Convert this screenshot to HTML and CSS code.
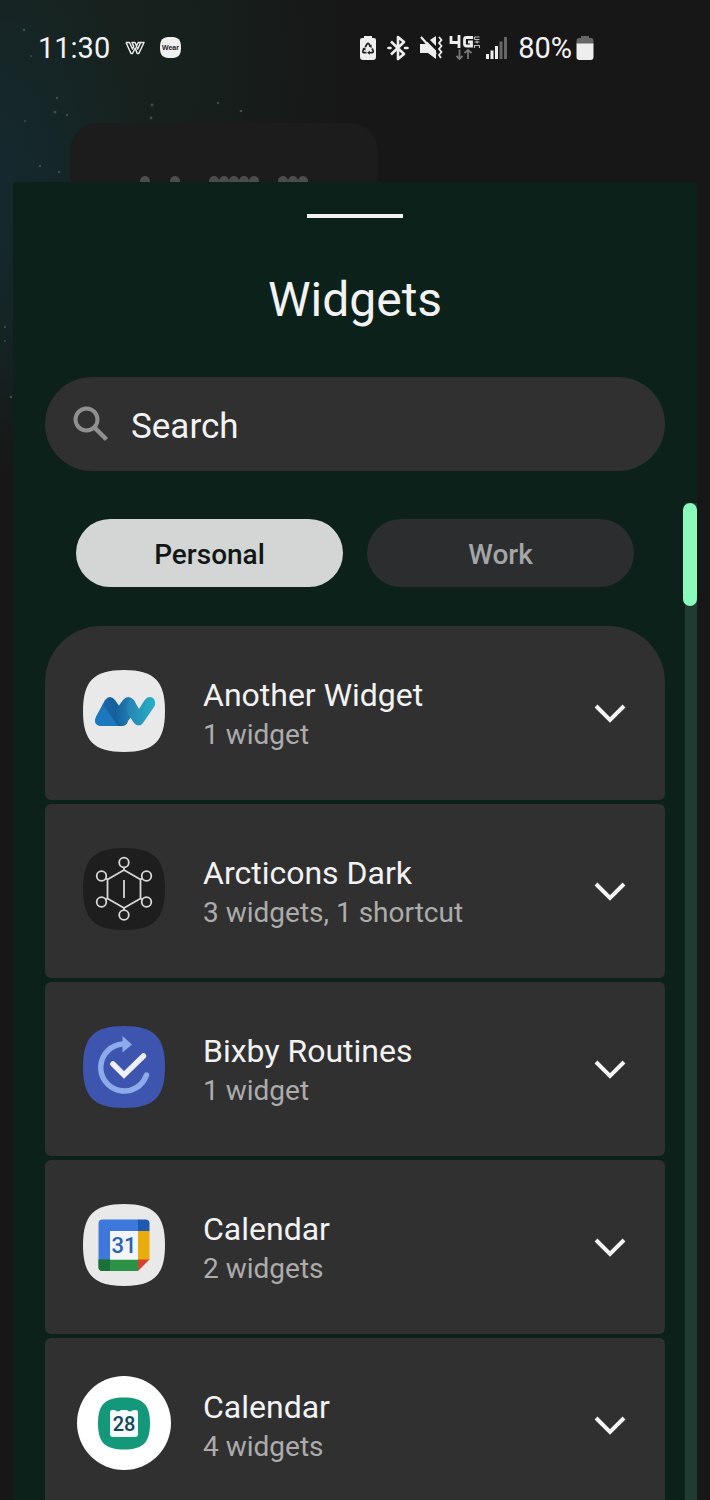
FILE: index.html
```html
<!DOCTYPE html>
<html lang="en">
<head>
<meta charset="utf-8">
<meta name="viewport" content="width=device-width, initial-scale=1">
<title>Widgets</title>
<link rel="stylesheet" href="styles.css">
</head>
<body>
<svg class="stars" viewBox="0 0 250 420" aria-hidden="true">
  <g fill="#39534b"><circle cx="24" cy="30" r="1.3"/><circle cx="31" cy="56" r="1"/><circle cx="57" cy="98" r="1.2"/><circle cx="55" cy="112" r="1.5"/><circle cx="67" cy="115" r="1.2"/><circle cx="25" cy="121" r="1"/><circle cx="152" cy="105" r="1.4"/><circle cx="151" cy="118" r="1.4"/><circle cx="218" cy="103" r="1.2"/><circle cx="241" cy="111" r="1.3"/><circle cx="40" cy="166" r="1.2"/><circle cx="59" cy="172" r="1.2"/><circle cx="5" cy="327" r="1.1"/><circle cx="5" cy="341" r="1"/><circle cx="11" cy="397" r="1.2"/></g>
</svg>
<header class="status">
  <div class="status-left">
    <time class="clock">11:30</time>
    <svg width="20" height="14" viewBox="0 0 20 14" fill="none" stroke="#e8e8e8" stroke-width="1.5" stroke-linejoin="round"><path d="M1 1.500h3.500L7.500 8l1.200-2.600L7 1.500h3l1.500 3.200M1 1.500 6 12.500h1.500l2.700-5.500 2 5.500h1.600L19 1.500h-3.300l-3 6.500-1.300-2.800 1.800-3.700h3"/></svg>
    <svg width="21" height="21" viewBox="0 0 21 21"><path d="M10.500 0C18.500 0 21 2.500 21 10.500S18.500 21 10.500 21 0 18.500 0 10.500 2.500 0 10.500 0z" fill="#f0f0f0"/><text x="10.500" y="13" text-anchor="middle" class="wear">Wear</text></svg>
  </div>
  <div class="status-right">
    <svg width="18" height="26" viewBox="0 0 18 26"><path d="M5 1h8v2h2q2 0 2 2v17q0 3-3 3H4q-3 0-3-3V5q0-2 2-2h2z" fill="#eee"/><g fill="none" stroke="#222" stroke-width="1.700"><path d="m6.300 12 1.700-3q1-1.400 2 0l1.500 2.600M13 13.500l1.200 2.300q.500 1.700-1.200 1.900h-3M7.500 17.700H5q-1.700-.200-1-2L5.300 13"/></g><path d="m12.500 9.500.200 3.400-3-1.300zM10.800 15.500v4.200l-2.700-2zM3.300 13.900l3-1.600.3 3.300z" fill="#222"/></svg>
    <svg width="22" height="26" viewBox="0 0 22 26" fill="none" stroke="#eee" stroke-width="2.600" stroke-linejoin="round"><path d="m4 6.500 13 12.500-6 5V2l6 5L4 19.500"/><path d="M1.500 13h2M18 13h2.500" stroke-linecap="round"/></svg>
    <div class="network">
      <svg width="24" height="26" viewBox="0 0 24 26" fill="none"><path d="M1 9h5l2.500-2L17 15.500V24l-8-6H1zM11 5l6-4v10z" fill="#eee"/><path d="m2 2 15 17" stroke="#eee" stroke-width="2.200"/><path d="m20 2 2.500 3L20 8l2.500 3-2.500 3 2.500 3-2.500 3 2 3" stroke="#eee" stroke-width="1.800"/></svg>
      <svg width="31" height="26" viewBox="0 0 31 26"><g fill="none" stroke="#eee" stroke-width="2.800"><path d="M2 1v6.500h8M10 0v13M24 2.500h-6.500q-2 0-2 2v4.500q0 2 2 2h5V7H19"/></g><g fill="none" stroke="#bbb" stroke-width="1.200"><path d="M25.500 2h5M25.500 4.500h5M25.500 2v2.500M25.500 7h5M28 5.500v3M25.500 10.500h5V13M25.500 10v3"/></g><path d="M10.500 14.500V24m-3-3 3 3 3-3M19 24v-9m-3.500 3 3.500-3 3.500 3" fill="none" stroke="#777" stroke-width="1.800"/></svg>
      <svg width="22" height="22" viewBox="0 0 22 22"><path d="M0 17h3v5H0zM4.500 13.500h3V22h-3zM9 9h3v13H9z" fill="#eee"/><path d="M13.500 4.500h3V22h-3zM18 0h3v22h-3z" fill="#666"/></svg>
    </div>
    <div class="battery">
      <span class="percent">80%</span>
      <svg width="18" height="26" viewBox="0 0 18 26"><path d="M5 1h8v2h2q2.500 0 2.500 3v3H.500V6q0-3 2.500-3h2z" fill="#666"/><path d="M.500 8.500h17V22q0 3-3 3h-11q-3 0-3-3z" fill="#eee"/></svg>
    </div>
  </div>
</header>

<div class="home-widget" aria-hidden="true">
  <svg width="180" height="6" viewBox="0 0 180 6" fill="#4c4c4c"><circle cx="5" cy="5" r="5"/><circle cx="35" cy="5" r="5"/><circle cx="74" cy="5" r="5"/><circle cx="84" cy="5" r="5"/><circle cx="94" cy="5" r="5"/><circle cx="104" cy="5" r="5"/><circle cx="114" cy="5" r="5"/><circle cx="143" cy="5" r="5"/><circle cx="153" cy="5" r="5"/><circle cx="163" cy="5" r="5"/></svg>
</div>

<main class="sheet">
  <div class="handle"></div>
  <h1 class="title">Widgets</h1>
  <label class="search">
    <svg width="36" height="36" viewBox="0 0 36 36" fill="none" stroke="#909090" stroke-width="4"><circle cx="13.500" cy="13.500" r="11"/><path d="m21.500 21.500 12 12" stroke-width="4.500"/></svg>
    <input class="search-input" type="search" placeholder="Search" aria-label="Search">
  </label>
  <div class="tabs" role="tablist">
    <button class="tab tab-active" role="tab" aria-selected="true">Personal</button>
    <button class="tab" role="tab" aria-selected="false">Work</button>
  </div>
  <div class="list">
    <button class="row">
      <span class="icon">
        <svg width="82" height="82" viewBox="0 0 82 82"><defs><linearGradient id="aw1" x1="0" x2="1"><stop stop-color="#1a6aa8"/><stop offset="1" stop-color="#155a98"/></linearGradient><linearGradient id="aw2" x1="0" x2="1"><stop stop-color="#155f9e"/><stop offset="1" stop-color="#2690bd"/></linearGradient><linearGradient id="aw3" x1="0" x2="1"><stop stop-color="#2480b3"/><stop offset="1" stop-color="#28b2c5"/></linearGradient></defs><path d="M41 0C71 0 82 11 82 41S71 82 41 82 0 71 0 41 11 0 41 0z" fill="#e9e9e9"/><path d="M22 30q5-6 10 0l13 19q0 7-6 7H17q-7-2-4-9z" fill="url(#aw1)"/><path d="M20 35 35 56H17q-7-2-4-9z" fill="#1b78bd"/><path d="m32 41 8-11q5-6 11 0l4 8-10 13q-5 7-9 3z" fill="url(#aw2)"/><path d="M47 28q2 0 4 3l5 8 5-8q4-6 9-3 4 4 1 9L60 53q-4 5-9 0l-6-9-2-7z" fill="url(#aw3)"/></svg>
      </span>
      <span class="text"><span class="name">Another Widget</span><span class="count">1 widget</span></span>
      <svg class="chevron" viewBox="0 0 48 48"><path d="m10 17 14 14 14-14"/></svg>
    </button>
    <button class="row">
      <span class="icon">
        <svg width="82" height="82" viewBox="0 0 82 82"><path d="M41 0C71 0 82 11 82 41S71 82 41 82 0 71 0 41 11 0 41 0z" fill="#1e1e1e"/><g fill="none" stroke="#d8d8d8" stroke-width="1.800"><path d="m41 22 16.500 9.500v19L41 60l-16.500-9.500v-19zM41 32v18M41 19v3M41 60v3M57.500 31.500l2-1M57.500 50.500l2 1M24.500 31.500l-2-1M24.500 50.500l-2 1"/><circle cx="41" cy="14.500" r="4.800"/><circle cx="41" cy="67" r="4.800"/><circle cx="18.500" cy="28" r="4.800"/><circle cx="63.500" cy="28" r="4.800"/><circle cx="18.500" cy="54" r="4.800"/><circle cx="63.500" cy="54" r="4.800"/></g></svg>
      </span>
      <span class="text"><span class="name">Arcticons Dark</span><span class="count">3 widgets, 1 shortcut</span></span>
      <svg class="chevron" viewBox="0 0 48 48"><path d="m10 17 14 14 14-14"/></svg>
    </button>
    <button class="row">
      <span class="icon">
        <svg width="82" height="82" viewBox="0 0 82 82"><path d="M41 0C71 0 82 11 82 41S71 82 41 82 0 71 0 41 11 0 41 0z" fill="#3d55ae"/><path d="M40 18A23.500 23.500 0 1 0 63.500 49" fill="none" stroke="#8cabea" stroke-width="5.500" stroke-linecap="round"/><path d="m39.500 10 9.500 8.500-9.500 8z" fill="#8cabea"/><path d="m30 38 11 11 19.500-19" fill="none" stroke="#eef0fa" stroke-width="5.500" stroke-linecap="round"/></svg>
      </span>
      <span class="text"><span class="name">Bixby Routines</span><span class="count">1 widget</span></span>
      <svg class="chevron" viewBox="0 0 48 48"><path d="m10 17 14 14 14-14"/></svg>
    </button>
    <button class="row">
      <span class="icon">
        <svg width="82" height="82" viewBox="0 0 82 82"><path d="M41 0C71 0 82 11 82 41S71 82 41 82 0 71 0 41 11 0 41 0z" fill="#e9e9e9"/><path d="M15.500 56V19.500q0-4 4-4H56v12H27V56z" fill="#3f78dc"/><path d="M55 15.500h7.500q4 0 4 4v8H55z" fill="#2059b0"/><path d="M55 27h11.500v29H55z" fill="#e9ac0c"/><path d="M15.500 55.500H55V67H19.500q-4 0-4-4z" fill="#2b9246"/><path d="M15.500 55.500H27V67h-7.500q-4 0-4-4z" fill="#1b7038"/><path d="M55 55.500h11.500L55 67z" fill="#d84031"/><path d="M27 27h28v28.500H27z" fill="#f3f5f8"/><text x="41" y="49" text-anchor="middle" class="date-blue">31</text></svg>
      </span>
      <span class="text"><span class="name">Calendar</span><span class="count">2 widgets</span></span>
      <svg class="chevron" viewBox="0 0 48 48"><path d="m10 17 14 14 14-14"/></svg>
    </button>
    <button class="row">
      <span class="icon">
        <svg width="94" height="94" viewBox="0 0 94 94"><circle cx="47" cy="47" r="47" fill="#fff"/><path d="M47 21.500c19 0 26 7 26 26s-7 26-26 26-26-7-26-26 7-26 26-26z" fill="#14987a"/><path d="M35 34h3a3.500 3 0 0 0 6 0h6a3.500 3 0 0 0 6 0h3q2 0 2 2v22q0 3-3 3H36q-3 0-3-3V36q0-2 2-2z" fill="#f5fbfa"/><text x="47" y="55" text-anchor="middle" class="date-dark">28</text></svg>
      </span>
      <span class="text"><span class="name">Calendar</span><span class="count">4 widgets</span></span>
      <svg class="chevron" viewBox="0 0 48 48"><path d="m10 17 14 14 14-14"/></svg>
    </button>
  </div>
  <div class="scrollbar"><div class="thumb"></div></div>
</main>
</body>
</html>
```

FILE: styles.css
```css
* {
  box-sizing: border-box;
}

body {
  margin: 0;
  height: 100vh;
  overflow: hidden;
  display: flex;
  flex-direction: column;
  position: relative;
  font-family: Roboto, "Liberation Sans", sans-serif;
  color: #f2f2f2;
  background:
    radial-gradient(ellipse 140px 260px at 0 190px, #14292f 0, transparent 100%),
    radial-gradient(ellipse 340px 420px at 0 60px, #17231f 0, #16211d 50%, transparent 100%),
    #171717;
}

button,
input {
  font: inherit;
  color: inherit;
  border: 0;
  margin: 0;
}

.stars {
  position: absolute;
  top: 0;
  left: 0;
  width: 250px;
  height: 420px;
}

.status {
  display: flex;
  flex: none;
  justify-content: space-between;
  align-items: center;
  height: 95px;
  padding: 0 116px 0 38px;
  position: relative;
}

.status-left,
.status-right,
.network,
.battery {
  display: flex;
  align-items: center;
}

.status-left {
  gap: 15px;
}

.status-right {
  gap: 10px;
}

.network {
  gap: 6px;
}

.battery {
  gap: 4px;
}

.clock,
.percent {
  font-size: 29px;
}

.wear {
  font: bold 7px "Liberation Sans", sans-serif;
  fill: #222;
}

.home-widget {
  flex: none;
  width: 308px;
  height: 59px;
  margin: 28px 0 0 70px;
  padding-left: 70px;
  display: flex;
  align-items: flex-end;
  border-radius: 28px 28px 0 0;
  background: #1c1c1c;
  position: relative;
}

.sheet {
  flex: 1;
  min-height: 0;
  overflow: hidden;
  position: relative;
  display: flex;
  flex-direction: column;
  margin: 0 13px;
  padding: 32px 32px 0;
  background: #0b211a;
}

.handle {
  flex: none;
  align-self: center;
  width: 96px;
  height: 4px;
  background: #f2f2f2;
}

.title {
  margin: 50px 0 45px;
  font-size: 48px;
  line-height: 64px;
  font-weight: 400;
  text-align: center;
}

.search {
  flex: none;
  display: flex;
  align-items: center;
  gap: 22px;
  height: 94px;
  padding: 0 28px;
  border-radius: 47px;
  background: #303030;
}

.search-input {
  flex: 1;
  min-width: 0;
  padding: 4px 0 0;
  font-size: 35px;
  background: none;
  outline: 0;
}

.search-input::placeholder {
  color: #f2f2f2;
  opacity: 1;
}

.tabs {
  flex: none;
  display: flex;
  gap: 24px;
  margin: 48px 31px 39px;
}

.tab {
  flex: 1;
  height: 68px;
  padding: 2px 0 0;
  border-radius: 34px;
  font-size: 28px;
  font-weight: 500;
  color: #a3a5a7;
  background: #2b2d2f;
}

.tab-active {
  color: #121614;
  background: #d3d6d5;
}

.list {
  flex: none;
  display: flex;
  flex-direction: column;
  gap: 4px;
}

.row {
  display: flex;
  align-items: center;
  gap: 32px;
  height: 174px;
  padding: 0 31px 0 32px;
  border-radius: 6px;
  text-align: left;
  background: #303030;
}

.row:first-child {
  border-radius: 56px 56px 6px 6px;
}

.icon {
  flex: none;
  display: flex;
  justify-content: center;
  width: 94px;
  padding-bottom: 4px;
}

.text {
  flex: 1;
  display: flex;
  flex-direction: column;
  padding-top: 3px;
  line-height: 40px;
}

.name {
  font-size: 32px;
}

.count {
  font-size: 28px;
  color: #acacac;
}

.chevron {
  flex: none;
  width: 48px;
  height: 48px;
  fill: none;
  stroke: #f5f5f5;
  stroke-width: 4px;
}

.date-blue,
.date-dark {
  font: 500 22px Roboto, sans-serif;
  fill: #2763b4;
}

.date-dark {
  font-size: 20px;
  fill: #12485c;
}

.scrollbar {
  position: absolute;
  top: 321px;
  right: 0;
  bottom: 0;
  width: 14px;
  background: linear-gradient(90deg, transparent 2px, #203b32 2px);
}

.thumb {
  height: 103px;
  border-radius: 7px;
  background: #89fbbb;
}
```
